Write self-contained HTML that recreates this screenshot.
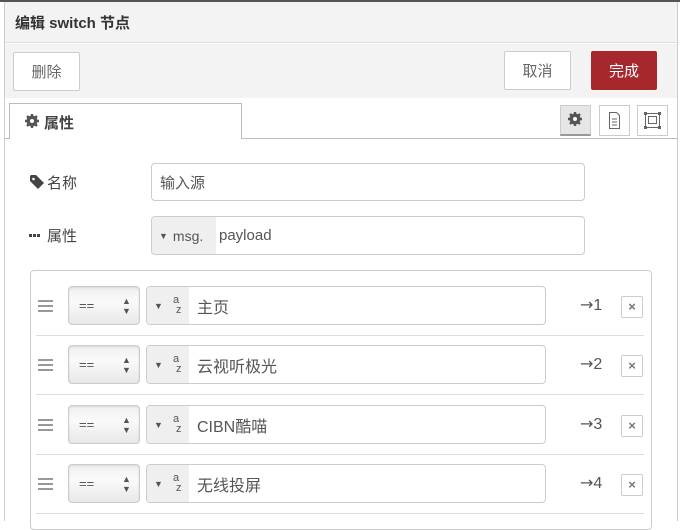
<!DOCTYPE html>
<html><head><meta charset="utf-8"><style>
*{box-sizing:border-box;margin:0;padding:0}
body{width:680px;height:521px;overflow:hidden;background:#fff;font-family:"Liberation Sans","Noto Sans CJK SC",sans-serif;color:#555;position:relative}
.a{position:absolute}
.btn{position:absolute;border:1px solid #ccc;border-radius:2px;background:#fff;font-size:15px;color:#666;display:flex;align-items:center;justify-content:center}
.inp{position:absolute;border:1px solid #ccc;border-radius:4px;background:#fff;font-size:15px;color:#555;display:flex;align-items:center}
.sel{position:absolute;border:1px solid #ccc;border-radius:4px;background:linear-gradient(#f0f0f0,#fafafa 40%,#e8e8e8);font-size:13px;color:#555;box-shadow:inset 0 1px 2px rgba(0,0,0,.1)}
.hr{position:absolute;left:36px;width:608px;height:1px;background:#ddd}
</style></head><body>
<svg width="0" height="0" style="position:absolute"><defs>
<g id="gear"><circle cx="0" cy="0" r="4.2" fill="none" stroke="currentColor" stroke-width="2.6"/><g stroke="currentColor" stroke-width="2.4"><path d="M0-7V7M-7 0H7M-5-5L5 5M-5 5L5-5"/></g><circle r="2" fill="#fff"/></g>
</defs></svg>
<div class="a" style="left:0;top:0;width:680px;height:2px;background:#555"></div>
<div class="a" style="left:4px;top:2px;width:674px;height:519px;border-left:1px solid #ccc;border-right:1px solid #ccc;background:#fff"></div>
<div class="a" style="left:5px;top:2px;width:672px;height:41px;background:#f3f3f3;border-bottom:1px solid #ddd"></div>
<div class="a" style="left:15px;top:12px;font-size:15px;font-weight:bold;color:#333">编辑 switch 节点</div>
<div class="a" style="left:5px;top:44px;width:672px;height:54px;background:#f3f3f3"></div>
<div class="btn" style="left:13px;top:52px;width:67px;height:39px">删除</div>
<div class="btn" style="left:504px;top:51px;width:67px;height:39px">取消</div>
<div class="btn" style="left:591px;top:51px;width:66px;height:39px;background:#a6282c;border-color:#a6282c;color:#fff">完成</div>
<div class="a" style="left:5px;top:138px;width:672px;height:1px;background:#bbb"></div>
<div class="a" style="left:9px;top:103px;width:233px;height:36px;background:#fff;border:1px solid #bbb;border-bottom:none;font-size:15px;font-weight:bold;color:#444;padding:8px 0 0 34px">属性</div>
<svg class="a" style="left:25px;top:114px;color:#555" width="14" height="14"><use href="#gear" x="7" y="7"/></svg>
<div class="a" style="left:560px;top:105px;width:31px;height:31px;background:#e6e6e6;border:1px solid #ccc;border-bottom:2px solid #999"></div>
<svg class="a" style="left:568px;top:112px;color:#555" width="14" height="14"><use href="#gear" x="7" y="7"/></svg>
<div class="a" style="left:599px;top:105px;width:31px;height:31px;border:1px solid #ccc;background:#fff">
<svg width="29" height="29"><path d="M9.5 6.5h7l3 3v13h-10z M12 13h5M12 16h5M12 19h5" fill="none" stroke="#666" stroke-width="1"/></svg></div>
<div class="a" style="left:637px;top:105px;width:31px;height:31px;border:1px solid #ccc;background:#fff">
<svg width="29" height="29"><rect x="7.5" y="7.5" width="14" height="14" fill="none" stroke="#666"/><rect x="10.5" y="10.5" width="8" height="7" fill="none" stroke="#666"/><g fill="#666"><rect x="6" y="6" width="3" height="3"/><rect x="20" y="6" width="3" height="3"/><rect x="6" y="20" width="3" height="3"/><rect x="20" y="20" width="3" height="3"/></g></svg></div>

<svg class="a" style="left:29px;top:174px" width="16" height="16"><path d="M1 2v5l8 8 6-6-8-8H2z" fill="#444"/><circle cx="4.5" cy="5" r="1.3" fill="#fff"/></svg>
<div class="a" style="left:47px;top:172px;font-size:15px;color:#444">名称</div>
<div class="inp" style="left:151px;top:163px;width:434px;height:38px;padding-left:8px">输入源</div>
<div class="a" style="left:29px;top:234px;width:3px;height:3px;background:#444;box-shadow:4px 0 #444,8px 0 #444"></div>
<div class="a" style="left:47px;top:225px;font-size:15px;color:#444">属性</div>
<div class="inp" style="left:151px;top:216px;width:434px;height:39px;overflow:hidden">
<div style="width:64px;height:100%;background:#efefef;display:flex;align-items:center;padding-left:7px;font-size:14px;color:#555"><span style="font-size:9px;margin-right:5px">▼</span>msg.</div>
<span style="margin-left:3px">payload</span></div>

<div class="a" style="left:30px;top:270px;width:622px;height:260px;border:1px solid #ccc;border-radius:4px"></div>

<div id="rows"></div>
<script>
var t=["主页","云视听极光","CIBN酷喵","无线投屏"],h="";
for(var i=0;i<4;i++){var y=Math.round(286+i*59.3);
h+='<div class="a" style="left:38px;top:'+(y+14)+'px;width:15px;height:2px;background:#999;box-shadow:0 5px #999,0 10px #999"></div>';
h+='<div class="sel" style="left:68px;top:'+y+'px;width:72px;height:39px"><span class="a" style="left:10px;top:11px">==</span><span class="a" style="left:53px;top:9px;font-size:9px;line-height:10px">▲<br>▼</span></div>';
h+='<div class="inp" style="left:146px;top:'+y+'px;width:400px;height:39px;overflow:hidden"><div style="width:42px;height:100%;background:#efefef;position:relative;font-size:9px"><span class="a" style="left:7px;top:14px">▼</span><span class="a" style="left:26px;top:8px;font-size:11px;line-height:10px">a<br>&nbsp;z</span></div><span style="margin-left:8px;font-size:16px">'+t[i]+'</span></div>';
h+='<div class="a" style="left:580px;top:'+(y+9)+'px;font-size:16px;color:#555;font-family:\'DejaVu Sans\',sans-serif">→<span style="font-family:\'Liberation Sans\'">'+(i+1)+'</span></div>';
h+='<div class="a" style="left:621px;top:'+(y+10)+'px;width:22px;height:22px;border:1px solid #ccc;border-radius:2px;font-size:13px;font-weight:bold;text-align:center;line-height:20px;color:#777">×</div>';
h+='<div class="hr" style="top:'+(y+49)+'px"></div>';}
document.getElementById('rows').innerHTML=h;
</script>
</body></html>
